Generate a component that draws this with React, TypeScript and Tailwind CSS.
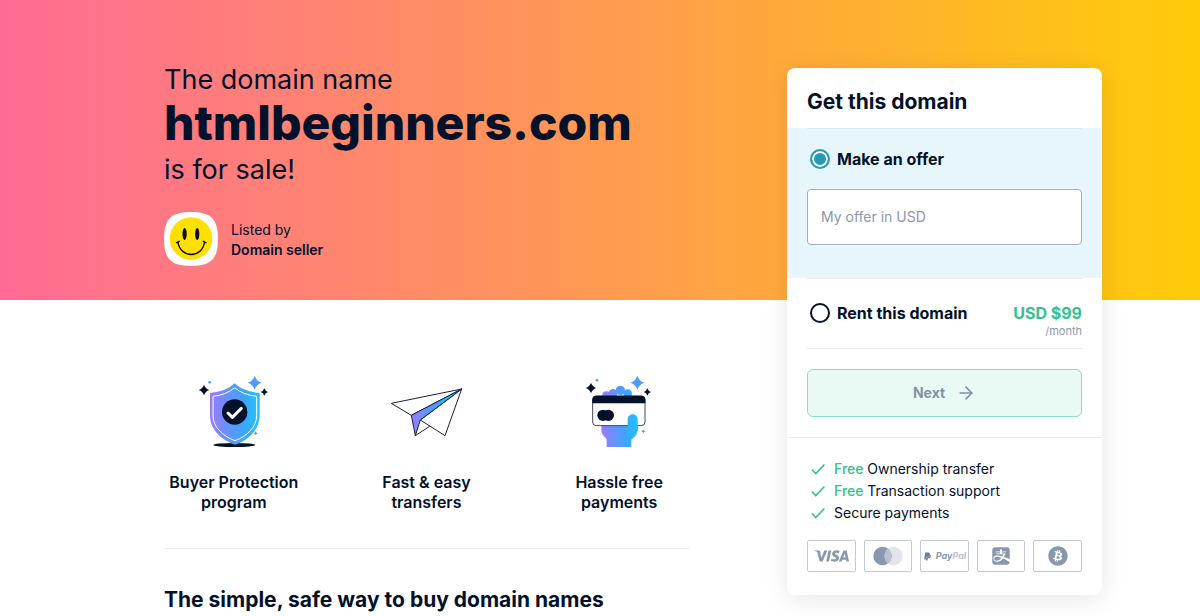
import type { ReactNode } from "react";
import { useState } from "react";
import { ArrowRight } from "lucide-react";
import { FaAlipay, FaBitcoin, FaPaypal } from "react-icons/fa";
import { SiVisa } from "react-icons/si";

function Gradient({ id, x1, x2 }: { id: string; x1: number; x2: number }) {
  return (
    <defs>
      <linearGradient id={id} gradientUnits="userSpaceOnUse" x1={x1} y1="0" x2={x2} y2="0">
        <stop offset="0" stopColor="#9a7bff" />
        <stop offset="0.65" stopColor="#3fa4fa" />
        <stop offset="1" stopColor="#1fc3ff" />
      </linearGradient>
    </defs>
  );
}

function Sparkle({ x, y, r, fill }: { x: number; y: number; r: number; fill: string }) {
  const k = r * 0.25;
  return (
    <path
      fill={fill}
      d={`M${x} ${y - r}Q${x + k} ${y - k} ${x + r} ${y}Q${x + k} ${y + k} ${x} ${y + r}Q${x - k} ${y + k} ${x - r} ${y}Q${x - k} ${y - k} ${x} ${y - r}Z`}
    />
  );
}

function ShieldArt() {
  return (
    <svg viewBox="52 28 216 216" className="size-18" aria-hidden="true">
      <Gradient id="shield" x1={88} x2={238} />
      <ellipse cx="161" cy="238" rx="63" ry="6" fill="#03112b" />
      <path fill="url(#shield)" d="M162 53Q188 78 237 82V150C237 190 205 222 163 237C121 222 88 190 88 150V82Q136 78 162 53Z" />
      <path fill="none" stroke="#fff" strokeWidth="3" d="M162 66Q188 88 228 92V150C228 184 200 211 163 225C126 211 97 184 97 150V92Q136 88 162 66Z" />
      <circle cx="162" cy="139" r="38" fill="#03112b" />
      <path fill="none" stroke="#fff" strokeWidth="9" strokeLinecap="round" strokeLinejoin="round" d="M142 142L155 155L182 128" />
      <Sparkle x={70} y={73} r={16} fill="#03112b" />
      <Sparkle x={222} y={51} r={21} fill="#4f9cf8" />
      <Sparkle x={251} y={79} r={11} fill="#03112b" />
      <circle cx="87" cy="50" r="4" fill="#4f9cf8" />
      <Sparkle x={225} y={203} r={6} fill="#4f9cf8" />
    </svg>
  );
}

function PlaneArt() {
  return (
    <svg viewBox="30 -2 216 216" className="size-18" aria-hidden="true">
      <Gradient id="plane" x1={94} x2={215} />
      <g fill="none" stroke="#1b2238" strokeWidth="3" strokeLinejoin="round">
        <path d="M245 40L34 83L94 119Z" />
        <path d="M245 40L195 180L121 133Z" />
        <path d="M106 180L149 152" />
        <path fill="url(#plane)" d="M245 40L94 119L106 180L121 133Z" />
      </g>
    </svg>
  );
}

function CardArt() {
  return (
    <svg viewBox="39 28 216 216" className="size-18" aria-hidden="true">
      <Gradient id="hand" x1={94} x2={204} />
      <g fill="url(#hand)">
        <circle cx="109" cy="89" r="12" />
        <circle cx="129" cy="83" r="13" />
        <circle cx="151" cy="74" r="14" />
        <circle cx="173" cy="84" r="13" />
        <path d="M94 175V196Q96 208 110 220V249H184V222Q203 208 204 190V175Z" />
      </g>
      <rect x="68" y="91" width="157" height="89" rx="11" fill="#fff" stroke="#1b2238" strokeWidth="2.5" />
      <path fill="#03112b" d="M67 113V102Q67 90 79 90H214Q226 90 226 102V113Z" />
      <circle cx="99" cy="149" r="17" fill="#03112b" />
      <circle cx="115" cy="149" r="17" fill="#03112b" />
      <path fill="url(#hand)" d="M173 200V161A15 15 0 0 1 203 161V195Z" />
      <Sparkle x={63} y={67} r={16} fill="#03112b" />
      <Sparkle x={202} y={51} r={21} fill="#4f9cf8" />
      <Sparkle x={232} y={79} r={11} fill="#03112b" />
      <Sparkle x={81} y={44} r={6} fill="#4f9cf8" />
      <Sparkle x={220} y={197} r={6} fill="#4f9cf8" />
    </svg>
  );
}

function Smiley() {
  return (
    <svg viewBox="0 0 54 54" className="size-[54px] shrink-0" aria-hidden="true">
      <path fill="#fff" d="M27 0C47 0 54 7 54 27S47 54 27 54S0 47 0 27S7 0 27 0Z" />
      <circle cx="27" cy="26.500" r="21.300" fill="#ffe000" />
      <ellipse cx="20.600" cy="22" rx="2.100" ry="6" fill="#0a0a0a" />
      <ellipse cx="33.200" cy="22" rx="2.100" ry="6" fill="#0a0a0a" />
      <path fill="none" stroke="#0a0a0a" strokeWidth="1.400" strokeLinecap="round" d="M14 30C15 38 21 42.500 27.300 42.500S39.500 38 40.500 30M12.500 30.600Q14 30.600 15.200 29.300M39.300 29.300Q40.500 30.600 42 30.600" />
    </svg>
  );
}

function Feature({ art, children }: { art: ReactNode; children: ReactNode }) {
  return (
    <li className="flex flex-col items-center gap-[25px] text-center text-base leading-5 font-semibold">
      {art}
      <p>{children}</p>
    </li>
  );
}

function Perk({ free, children }: { free?: boolean; children: ReactNode }) {
  return (
    <li className="flex items-center gap-[9px]">
      <svg viewBox="0 0 14 12" className="ml-1 h-3 w-3.5" fill="none" stroke="#35c08f" strokeWidth="1.600" aria-hidden="true">
        <path d="M0.800 6.500L4.800 10.500L13.400 1.500" />
      </svg>
      <span>
        {free && <span className="font-medium text-[#35c08f]">Free </span>}
        {children}
      </span>
    </li>
  );
}

function Payment({ label, children }: { label: string; children: ReactNode }) {
  return (
    <li aria-label={label} className="flex h-8 items-center justify-center rounded-xs border border-[#c3cad6] text-[#8a98af]">
      {children}
    </li>
  );
}

const radio =
  "size-5 shrink-0 appearance-none rounded-full border-2 border-[#03112b] bg-white checked:border-[#1f9db4] checked:bg-[#1f9db4] checked:shadow-[inset_0_0_0_2px_#fff]";

export default function App() {
  const [choice, setChoice] = useState("offer");
  return (
    <main className="min-h-screen bg-white bg-[linear-gradient(90deg,#ff6b95_0%,#ff9a52_50%,#ffcc08_100%)] bg-[length:100%_300px] bg-no-repeat pt-17 pr-[98px] pb-5 pl-[164px] font-['Inter',sans-serif] text-[#03112b]">
      <div className="grid grid-cols-[1fr_315px] items-start gap-[98px]">
        <div>
          <header className="-mt-1.5 h-[238px]">
            <h1 className="text-[27px] leading-9 font-normal">
              The domain name
              <strong className="block pb-1 text-5xl leading-[50px] font-extrabold">htmlbeginners.com</strong>
              is for sale!
            </h1>
            <div className="mt-6 flex items-center gap-[13px] text-sm leading-5">
              <Smiley />
              <p className="pt-0.5">
                Listed by
                <strong className="block font-semibold">Domain seller</strong>
              </p>
            </div>
          </header>

          <ul className="mt-[75px] grid grid-cols-3 gap-[53px] border-b border-[#e8eaee] pb-9">
            <Feature art={<ShieldArt />}>Buyer Protection program</Feature>
            <Feature art={<PlaneArt />}>Fast &amp; easy<br />transfers</Feature>
            <Feature art={<CardArt />}>Hassle free<br />payments</Feature>
          </ul>
          <h2 className="mt-[35px] text-[21px] leading-8 font-bold">The simple, safe way to buy domain names</h2>
        </div>

        <aside className="rounded-lg bg-white shadow-[0_4px_24px_rgba(0,0,0,0.1)]">
          <form>
            <h2 className="mx-5 pt-[18px] pb-[10px] text-[21px] leading-8 font-bold">Get this domain</h2>
            <div className="bg-[#e7f6fb] px-5 pb-[33px]">
              <label className="flex items-center gap-[7px] border-t border-[#dbe8ef] py-5 pl-[3px] text-base leading-5 font-bold">
                <input type="radio" name="deal" className={radio} checked={choice === "offer"} onChange={() => setChoice("offer")} />
                Make an offer
              </label>
              <input
                type="text"
                aria-label="My offer in USD"
                placeholder="My offer in USD"
                className="h-14 w-full rounded-sm border border-[#a3adbd] bg-white px-[13px] pb-0.5 text-sm placeholder:text-[#8a98af]"
              />
            </div>
            <div className="mx-5 flex justify-between border-y border-[#e8eaee] pt-6 pb-[9px] pl-[3px]">
              <label className="flex h-5 items-center gap-[7px] text-base leading-5 font-bold">
                <input type="radio" name="deal" className={radio} checked={choice === "rent"} onChange={() => setChoice("rent")} />
                Rent this domain
              </label>
              <p className="text-right text-base leading-5 font-bold text-[#35c08f]">
                USD $99
                <span className="block text-[11px] leading-4 font-normal text-[#8a98af]">/month</span>
              </p>
            </div>
            <div className="border-b border-[#e8eaee] p-5">
              <button type="button" className="flex h-12 w-full items-center justify-center gap-[11px] rounded-md border border-[#86e0c0] bg-[#e9faf5] text-sm font-bold text-[#8391a7]">
                Next
                <ArrowRight className="size-5" strokeWidth={2} />
              </button>
            </div>
          </form>
          <ul className="px-5 pt-5 text-sm leading-[22px]">
            <Perk free>Ownership transfer</Perk>
            <Perk free>Transaction support</Perk>
            <Perk>Secure payments</Perk>
          </ul>
          <ul className="grid grid-cols-5 gap-2 px-5 pt-4 pb-[23px]">
            <Payment label="Visa"><SiVisa className="h-9 w-[35px]" /></Payment>
            <Payment label="Mastercard">
              <svg viewBox="0 0 30 20" className="h-5 w-[30px]" aria-hidden="true">
                <circle cx="20.500" cy="10" r="9.200" fill="#e1e5eb" />
                <circle cx="9.500" cy="10" r="9.200" fill="#8a98af" />
                <path fill="#b9c2cf" d="M15 2.600A9.200 9.200 0 0 1 15 17.400A9.200 9.200 0 0 1 15 2.600Z" />
              </svg>
            </Payment>
            <Payment label="PayPal">
              <FaPaypal className="mr-1 size-[9px] text-[#6d7d98]" />
              <span className="text-[9px] leading-3 font-bold italic">Pay<span className="text-[#bcc4d0]">Pal</span></span>
            </Payment>
            <Payment label="Alipay"><FaAlipay className="size-5" /></Payment>
            <Payment label="Bitcoin"><FaBitcoin className="size-5" /></Payment>
          </ul>
        </aside>
      </div>
    </main>
  );
}
